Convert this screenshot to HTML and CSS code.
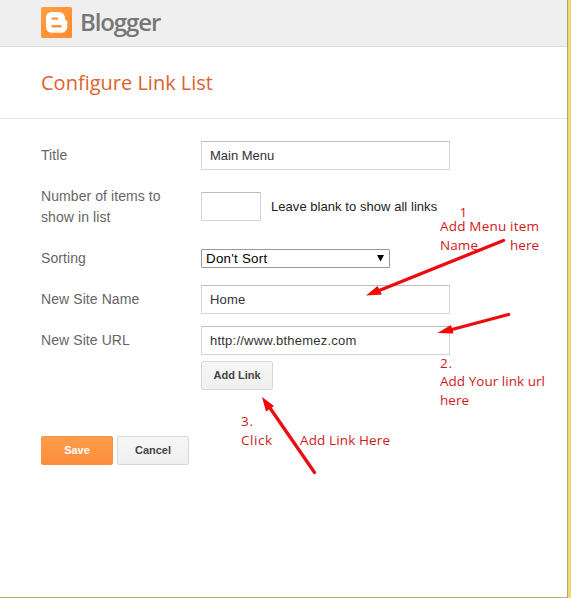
FILE: index.html
```html
<!DOCTYPE html>
<html lang="en">
<head>
<meta charset="utf-8">
<title>Configure Link List</title>
<link rel="stylesheet" href="styles.css">
</head>
<body>
<div class="window">
  <header class="brand">
    <svg class="logo" viewBox="0 0 31 31" width="31" height="31" aria-hidden="true">
      <defs><linearGradient id="lg" x1="0" y1="0" x2="1" y2="1"><stop offset="0" stop-color="#ffa040"/><stop offset="1" stop-color="#ff8a30"/></linearGradient></defs>
      <rect width="31" height="31" rx="1.5" fill="url(#lg)"/>
      <path fill="#fff" fill-rule="evenodd" d="M11 5h6.500c4 0 6.500 2.800 6.500 6v1c0 1 .6 1.400 1.400 1.400.6 0 .9.400.9 1v5.100c0 3.700-2.500 6.300-6.300 6.300h-9c-3.700 0-6-2.600-6-6.300V11c0-3.700 2.300-6 6-6zM11.500 10.400a1.200 1.200 0 0 0 0 2.400h4.700a1.200 1.200 0 0 0 0-2.400zM11.500 18a1.200 1.200 0 0 0 0 2.400h8a1.200 1.200 0 0 0 0-2.400z"/>
    </svg>
    <span class="brand-name">Blogger</span>
  </header>
  <div class="heading"><h1>Configure Link List</h1></div>
  <form class="form">
    <div class="row row-title">
      <label class="label">Title</label>
      <div class="field title">Main Menu</div>
    </div>
    <div class="row row-count">
      <label class="label">Number of items to<br>show in list</label>
      <div class="inline"><div class="field small"></div><span class="hint">Leave blank to show all links</span></div>
    </div>
    <div class="row row-sort">
      <label class="label">Sorting</label>
      <div class="select"><span>Don't Sort</span><svg width="7" height="7" viewBox="0 0 7 7"><path d="M0 0h7L3.500 6.500z"/></svg></div>
    </div>
    <div class="row row-name">
      <label class="label">New Site Name</label>
      <div class="field">Home</div>
    </div>
    <div class="row row-url">
      <label class="label">New Site URL</label>
      <div class="field">http://www.bthemez.com</div>
    </div>
    <div class="row row-add"><span></span><button type="button" class="btn">Add Link</button></div>
    <div class="actions">
      <button type="button" class="btn primary">Save</button>
      <button type="button" class="btn">Cancel</button>
    </div>
  </form>
</div>
<svg class="notes" width="571" height="598" viewBox="0 0 571 598">
  <g class="note">
    <text x="459.500" y="217">1</text>
    <text x="440" y="231" textLength="99">Add Menu item</text>
    <text x="440" y="250" textLength="38">Name</text>
    <text x="510" y="250" textLength="29">here</text>
    <text x="440" y="368" textLength="12">2.</text>
    <text x="440" y="386" textLength="105">Add Your link url</text>
    <text x="440" y="405" textLength="29">here</text>
    <text x="241" y="426" textLength="12">3.</text>
    <text x="241" y="445" textLength="31">Click</text>
    <text x="300" y="445" textLength="90">Add Link Here</text>
  </g>
  <g class="arrows">
    <path class="shaft" d="M503.500 240.500L378 291M508.500 314.500L450 330M314.500 472.500L270 408"/>
    <path class="head" d="M366 295.500L377.500 286 382 294.500zM437.500 333L451 325 453.500 333.500zM262 397L274 406 266 411.500z"/>
  </g>
</svg>
</body>
</html>
```

FILE: styles.css
```css
* { box-sizing: border-box; }
body { margin: 0; background: #f0db6e; font-family: "Liberation Sans", Arial, sans-serif; }
.window {
  width: 568px;
  height: 598px;
  background: #fff;
  border-right: 1px solid #aaa67c;
  border-bottom: 1px solid #b8b66c;
  overflow: hidden;
}
.brand {
  display: flex;
  height: 47px;
  padding: 7px 0 0 41px;
  gap: 8px;
  background: #efefef;
  border-bottom: 1px solid #dedede;
}
.brand-name {
  font: 600 24px/30px "Open Sans", sans-serif;
  letter-spacing: -1.1px;
  color: #777;
}
.heading { height: 72px; padding: 21px 0 0 41px; border-bottom: 1px solid #e5e5e5; }
h1 { margin: 0; font: 400 20px/30px "Open Sans", sans-serif; color: #e0622c; }
.form { padding: 22px 0 0 41px; }
.row { display: grid; grid-template-columns: 160px 249px; align-items: center; }
.label { font-size: 14px; line-height: 21px; letter-spacing: .08px; color: #666; }
.row-title { height: 29px; margin-bottom: 16px; }
.row-count { height: 42px; margin-bottom: 20px; }
.row-sort { height: 20px; margin-bottom: 17px; }
.row-name { height: 29px; margin-bottom: 12px; }
.row-url { height: 29px; margin-bottom: 6px; }
.field {
  height: 29px;
  padding-left: 8px;
  border: 1px solid #d4d4d4;
  border-top-color: #bcbcbc;
  font-size: 13px;
  line-height: 27px;
  letter-spacing: .22px;
  color: #333;
}
.title { letter-spacing: 0; }
.small { width: 60px; }
.inline { display: flex; gap: 10px; align-items: center; margin-bottom: 1px; }
.hint { font-size: 13px; letter-spacing: .05px; color: #222; }
.select {
  display: flex;
  width: 189px;
  height: 19px;
  padding: 0 5px 0 4px;
  justify-content: space-between;
  align-items: center;
  border: 1px solid #999;
  border-radius: 1px;
  font-size: 13.333px;
  letter-spacing: .05px;
  color: #000;
}
.btn {
  width: 72px;
  height: 29px;
  padding: 0 0 2px;
  border: 1px solid #d8d8d8;
  border-radius: 2px;
  background: linear-gradient(#f6f6f6, #f0f0f0);
  font: bold 11px "Liberation Sans", Arial, sans-serif;
  color: #444;
}
.actions { display: flex; gap: 4px; margin-top: 46px; }
.primary { border-color: #fb8f3d; background: linear-gradient(#ff9d4b, #fb8d3c); color: #fff; }
.notes { position: absolute; left: 0; top: 0; }
.note { font: 13.500px "Open Sans", sans-serif; fill: #d0191c; }
.shaft { stroke: #ec0c10; stroke-width: 3.300; stroke-linecap: round; fill: none; }
.head { fill: #f60408; }
.select span { letter-spacing: .25px; }
```
